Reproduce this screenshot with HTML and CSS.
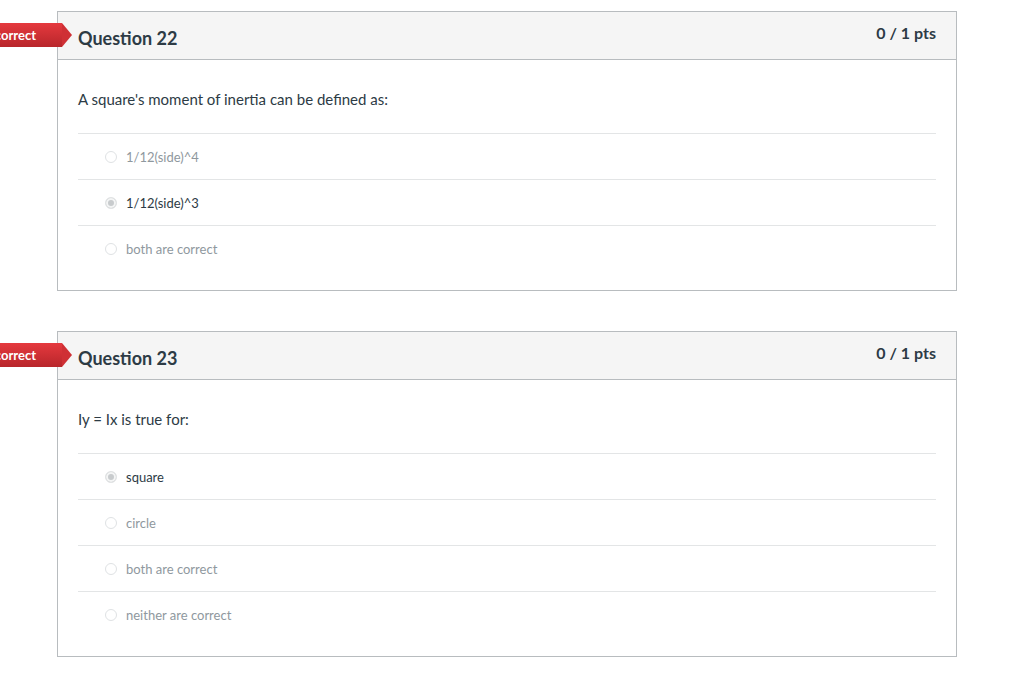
FILE: index.html
```html
<!DOCTYPE html>
<html>
<head>
<meta charset="utf-8">
<link rel="stylesheet" href="styles.css">
</head>
<body>
<div class="page">
  <div class="question">
    <div class="flag"><span>Incorrect</span></div>
    <div class="q-header">
      <h2 class="q-title">Question 22</h2>
      <div class="q-pts">0 / 1 pts</div>
    </div>
    <div class="q-body">
      <div class="q-text">A square's moment of inertia can be defined as:</div>
      <div class="answers">
        <div class="answer"><span class="radio"></span><span class="label">1/12(side)^4</span></div>
        <div class="answer selected"><span class="radio"></span><span class="label">1/12(side)^3</span></div>
        <div class="answer"><span class="radio"></span><span class="label">both are correct</span></div>
      </div>
    </div>
  </div>

  <div class="question">
    <div class="flag"><span>Incorrect</span></div>
    <div class="q-header">
      <h2 class="q-title">Question 23</h2>
      <div class="q-pts">0 / 1 pts</div>
    </div>
    <div class="q-body">
      <div class="q-text">Iy = Ix is true for:</div>
      <div class="answers">
        <div class="answer selected"><span class="radio"></span><span class="label">square</span></div>
        <div class="answer"><span class="radio"></span><span class="label">circle</span></div>
        <div class="answer"><span class="radio"></span><span class="label">both are correct</span></div>
        <div class="answer"><span class="radio"></span><span class="label">neither are correct</span></div>
      </div>
    </div>
  </div>
</div>
</body>
</html>
```

FILE: styles.css
```css
html, body {
  margin: 0;
  padding: 0;
  background: #ffffff;
  font-family: Lato, "Liberation Sans", sans-serif;
  color: #2d3b45;
}

.page {
  padding: 11px 0 0 57px;
  width: 900px;
  display: flex;
  flex-direction: column;
  gap: 40px;
}

.question {
  position: relative;
  border: 1px solid #b8bcbf;
  background: #fff;
}

.flag {
  position: absolute;
  left: -58px;
  top: 11px;
  width: 62px;
  height: 24px;
  background: linear-gradient(#e5393e, #b8262b);
  color: #fff;
  font-size: 13px;
  font-weight: 700;
  line-height: 24px;
}

.flag span {
  position: absolute;
  right: 26px;
  top: 0;
  white-space: nowrap;
}

.flag::after {
  content: "";
  position: absolute;
  right: -10px;
  top: 0;
  width: 0;
  height: 0;
  border-top: 12px solid transparent;
  border-bottom: 12px solid transparent;
  border-left: 10px solid #cf3035;
}

.q-header {
  background: #f5f5f5;
  border-bottom: 1px solid #b8bcbf;
  height: 47px;
  display: flex;
  justify-content: space-between;
  align-items: flex-start;
  padding: 0 20px 0 20px;
}

.q-title {
  margin: 0;
  font-size: 18px;
  font-weight: 700;
  line-height: 22px;
  padding-top: 15px;
}

.q-pts {
  font-size: 16px;
  font-weight: 700;
  line-height: 20px;
  padding-top: 11px;
}

.q-body {
  padding: 29px 20px 19px 20px;
}

.q-text {
  font-size: 15px;
  line-height: 20px;
  margin-bottom: 24px;
}

.answer {
  border-top: 1px solid #e3e5e6;
  height: 45px;
  display: flex;
  align-items: center;
  padding-left: 27px;
  color: #8f989e;
  font-size: 13px;
}

.answer.selected {
  color: #2d3b45;
}

.radio {
  width: 10px;
  height: 10px;
  border-radius: 50%;
  border: 1px solid #dfe2e4;
  background: #fff;
  margin-right: 9px;
  flex: none;
}

.answer.selected .radio {
  background: #c8cbcd;
  border-color: #e2e4e5;
  box-shadow: inset 0 0 0 2px #f4f5f5;
}

.label {
  line-height: 16px;
}
```
